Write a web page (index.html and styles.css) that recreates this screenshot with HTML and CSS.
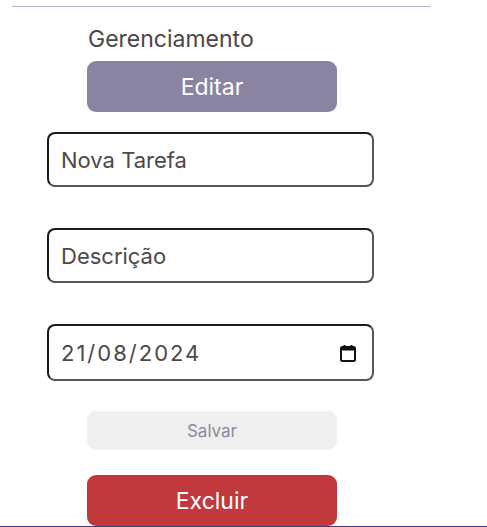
FILE: index.html
```html
<!DOCTYPE html>
<html lang="pt-BR">
<head>
<meta charset="utf-8">
<title>Gerenciamento</title>
<link rel="stylesheet" href="styles.css">
</head>
<body>
<div class="page">
  <hr class="top-line">
  <div class="manage">
    <h2 class="title">Gerenciamento</h2>
    <button class="btn btn-edit">Editar</button>
  </div>
  <form class="form">
    <div class="field"><input class="input" type="text" value="Nova Tarefa"></div>
    <div class="field"><input class="input" type="text" value="Descrição"></div>
    <div class="field field-date">
      <input class="input input-date" type="text" value="21/08/2024">
      <svg class="cal" width="20" height="20" viewBox="0 0 20 20" aria-hidden="true">
        <rect x="3" y="4" width="14" height="14" rx="1.5" fill="none" stroke="#111" stroke-width="2"/>
        <rect x="3" y="4" width="14" height="3.5" fill="#111"/>
        <rect x="5.5" y="2" width="2" height="3" fill="#111"/>
        <rect x="12.5" y="2" width="2" height="3" fill="#111"/>
      </svg>
    </div>
    <div class="actions">
      <button type="button" class="btn btn-save">Salvar</button>
      <button type="button" class="btn btn-delete">Excluir</button>
    </div>
  </form>
  <div class="bottom-line"></div>
</div>
</body>
</html>
```
FILE: styles.css
```css
* { box-sizing: border-box; }
html, body { margin: 0; padding: 0; background: #fff; }
body { font-family: Inter, "Noto Sans", sans-serif; color: #4e4848; }
.page { width: 487px; height: 527px; display: flex; flex-direction: column; overflow: hidden; }
.top-line { margin: 6px 57px 0 12px; border: 0; height: 1px; background: #b5afcf; }
.manage { display: flex; flex-direction: column; padding-left: 87px; margin-top: 19px; }
.title { margin: 0 0 0 1px; font-size: 23px; font-weight: 400; line-height: 27px; color: #4c4646; }
.btn { width: 250px; border: 0; border-radius: 9px; font-family: inherit; cursor: pointer; }
.btn-edit { margin-top: 8px; height: 51px; background: #8a83a2; color: #fff; font-size: 23px; }
.form { display: flex; flex-direction: column; padding-left: 47px; margin: 20px 0 0; }
.field { width: 327px; height: 55px; border: 2px solid; border-color: #1c1a1a #5e5454 #5e5454 #1c1a1a; border-radius: 8px; display: flex; align-items: center; padding: 0 12px; margin-bottom: 41px; }
.field-date { height: 57px; margin-bottom: 30px; }
.input { flex: 1; min-width: 0; border: 0; outline: none; background: transparent; font-family: inherit; font-size: 22px; color: #4e4848; padding: 0; }
.input-date { letter-spacing: 2px; }
.cal { flex: none; margin-right: 2px; }
.actions { display: flex; flex-direction: column; padding-left: 40px; gap: 25px; }
.btn-save { height: 39px; background: #efefef; color: #8a8a9e; font-size: 17px; }
.btn-delete { height: 51px; background: #c1393d; color: #fff; font-size: 23px; }
.bottom-line { margin-top: auto; height: 1px; background: #3f3d7a; }
```
